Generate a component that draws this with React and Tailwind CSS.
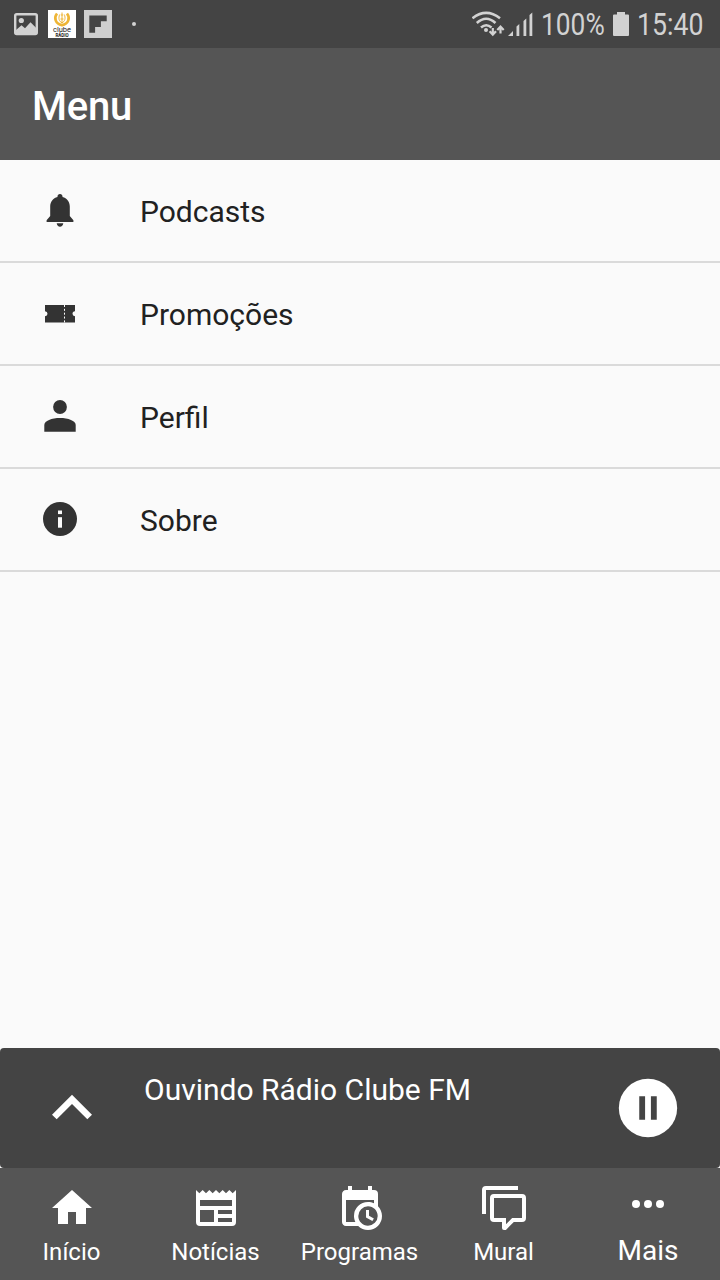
import { useState } from "react";

// =============================
// ICONS
// =============================

function NavIcon({ path }) {
  return (
    <svg className="size-12" viewBox="0 0 24 24" fill="currentColor">
      <path d={path} />
    </svg>
  );
}

const homePath = "M10,20V14H14V20H19V12H22L12,3L2,12H5V20H10Z";
const newsPath =
  "M20,11H4V8H20M20,15H13V13H20M20,19H13V17H20M11,19H4V13H11M20.33,4.67L18.67,3L17,4.67L15.33,3L13.67,4.67L12,3L10.33,4.67L8.67,3L7,4.67L5.33,3L3.67,4.67L2,3V19A2,2 0 0,0 4,21H20A2,2 0 0,0 22,19V3L20.33,4.67Z";
const calendarPath =
  "M15,13H16.5V15.82L18.94,17.23L18.19,18.53L15,16.69V13M19,8H5V19H9.67C9.24,18.09 9,17.07 9,16A7,7 0 0,1 16,9C17.07,9 18.09,9.24 19,9.67V8M5,21C3.89,21 3,20.1 3,19V5C3,3.89 3.89,3 5,3H6V1H8V3H16V1H18V3H19A2,2 0 0,1 21,5V11.1C22.24,12.36 23,14.09 23,16A7,7 0 0,1 16,23C14.09,23 12.36,22.24 11.1,21H5M16,11.15A4.85,4.85 0 0,0 11.15,16C11.15,18.68 13.32,20.85 16,20.85A4.85,4.85 0 0,0 20.85,16C20.85,13.32 18.68,11.15 16,11.15Z";
const commentsPath =
  "M12,23A1,1 0 0,1 11,22V19H7A2,2 0 0,1 5,17V7A2,2 0 0,1 7,5H21A2,2 0 0,1 23,7V17A2,2 0 0,1 21,19H16.9L13.2,22.71C13,22.89 12.76,23 12.5,23H12M13,17V20.08L16.08,17H21V7H7V17H13M3,15H1V3A2,2 0 0,1 3,1H19V3H3V15Z";

function BellIcon() {
  return (
    <svg className="size-10" viewBox="0 0 40 40" fill="currentColor">
      <path d="M20 3c-1.500 0-2.500 1-2.500 2.300v.8C13 7.200 10.200 11 10.200 15.500V25L6.600 29.300V31h26.800v-1.700L29.800 25v-9.500c0-4.500-2.800-8.300-7.300-9.400v-.8C22.500 4 21.500 3 20 3z" />
      <path d="M16.700 32.300h6.600c-.3 2.100-1.600 3.400-3.300 3.400s-3-1.300-3.300-3.400z" />
    </svg>
  );
}

function TicketIcon() {
  return (
    <svg className="size-10" viewBox="0 0 40 40" fill="currentColor">
      <path d="M5 11h30v6.200a2.500 2.500 0 0 0 0 5v6.200H5v-6.200a2.500 2.500 0 0 0 0-5z" />
      <path d="M24.500 11v17.400" stroke="#fafafa" strokeWidth="1" strokeDasharray="2 1.850" />
    </svg>
  );
}

function PersonIcon() {
  return (
    <svg className="size-10" viewBox="0 0 40 40" fill="currentColor">
      <circle cx="20" cy="10" r="6.900" />
      <path d="M4.300 34.700V28c0-4.300 7.500-7 15.700-7s15.700 2.700 15.700 7v6.700z" />
    </svg>
  );
}

function InfoIcon() {
  return (
    <svg className="size-10" viewBox="0 0 40 40">
      <circle cx="20" cy="19" r="17" fill="currentColor" />
      <rect x="18" y="10.500" width="4" height="3.600" fill="#fafafa" />
      <rect x="18" y="17.200" width="4" height="10.500" fill="#fafafa" />
    </svg>
  );
}

function DotsIcon() {
  return (
    <svg className="size-12" viewBox="0 0 48 48" fill="currentColor">
      <circle cx="12" cy="24" r="4" />
      <circle cx="24" cy="24" r="4" />
      <circle cx="36" cy="24" r="4" />
    </svg>
  );
}

// =============================
// STATUS BAR
// =============================

function StatusBar() {
  return (
    <div className="flex h-12 items-center justify-between bg-[#444444] text-[#d2d2d2]">
      <div className="flex items-center pl-3.5">
        <svg className="h-7 w-6" viewBox="0 0 24 28">
          <rect x="1.200" y="4.200" width="21.600" height="19.800" rx="1.500" fill="none" stroke="currentColor" strokeWidth="2.400" />
          <circle cx="7.300" cy="10.500" r="2.600" fill="currentColor" />
          <path d="M3 21l4.500-5.300 3.300 3 5.700-6L21 18v3z" fill="#444444" />
          <path d="M2 20l5.500-4.800 3.500 3 5.500-6 5.500 5.500v6.300H2z" fill="currentColor" />
        </svg>

        {/* radio logo */}
        <div className="relative ml-2.5 flex size-7 flex-col items-center justify-end overflow-hidden bg-white font-['Roboto'] text-[#222222]">
          <svg className="absolute inset-0 size-7" viewBox="0 0 28 28" fill="none" stroke="#eeb536">
            <path d="M9 3.500C5.500 8 7.500 14 14 15.300C20.500 14 22.500 8 19 3.500" strokeWidth="2.600" />
            <path d="M11.700 4.500c-1.500 3.500-.7 7 2.300 8.300c3-1.300 3.800-4.800 2.300-8.300" strokeWidth="1" />
            <path d="M14 2.500v11M12.800 5h2.400M12.500 9h3" strokeWidth="1" />
          </svg>
          <div className="text-[7.500px] leading-[7px]">clube</div>
          <div className="text-[4.500px] font-bold leading-[5px]">RÁDIO</div>
        </div>

        <svg className="ml-2 size-7" viewBox="0 0 28 28">
          <path d="M0 0h28v28H0z" fill="#cfcfcf" />
          <path d="M5.300 5.500h17.400v5.800h-5.800v5.800h-5.800v5.600H5.300z" fill="#444444" />
        </svg>
        <div className="ml-5 size-1 rounded-full bg-current" />
      </div>

      <div className="flex items-center pr-4 text-[31px] leading-12">
        <svg className="h-12 w-16" viewBox="0 0 64 48" fill="none" stroke="currentColor" strokeWidth="2.600">
          <path d="M0.500 18.300Q14.200 7.500 28 18.300" />
          <path d="M4.800 23Q14.200 14.500 23.500 23" />
          <path d="M9 27.500Q14.200 23 19.500 27.500" />
          <circle cx="14" cy="30" r="2" fill="currentColor" stroke="none" />
          <path d="M20.800 28v7M17.600 31.300l3.200 3.300 3.200-3.300M28.500 33.500v-7M25.300 30l3.200-3.300 3.200 3.300" strokeWidth="2.200" />
          <path d="M36 36h5v-5zM44.500 36h2.800V24L44.500 26.500zM51.500 36h2.800V18.500L51.500 21zM57.500 36h2.800V12.500L57.500 15z" fill="currentColor" stroke="none" />
        </svg>
        <div className="ml-[5px] w-[65px] pt-0.5">
          <div className="w-max origin-left scale-x-[0.85]">100%</div>
        </div>
        <svg className="ml-[7px] h-6 w-4" viewBox="0 0 16 24" fill="currentColor">
          <path d="M4 0h8v2.500h3a1 1 0 0 1 1 1V23a1 1 0 0 1-1 1H1a1 1 0 0 1-1-1V3.500a1 1 0 0 1 1-1h3z" />
        </svg>
        <div className="ml-2 w-[67px] pt-0.5">
          <div className="w-max origin-left scale-x-[0.86]">15:40</div>
        </div>
      </div>
    </div>
  );
}

// =============================
// PAGE
// =============================

const items = [
  { label: "Podcasts", icon: <BellIcon /> },
  { label: "Promoções", icon: <TicketIcon /> },
  { label: "Perfil", icon: <PersonIcon /> },
  { label: "Sobre", icon: <InfoIcon /> },
];

const tabs = [
  { label: "Início", icon: <NavIcon path={homePath} /> },
  { label: "Notícias", icon: <NavIcon path={newsPath} /> },
  { label: "Programas", icon: <NavIcon path={calendarPath} /> },
  { label: "Mural", icon: <NavIcon path={commentsPath} /> },
  { label: "Mais", icon: <DotsIcon /> },
];

export default function App() {
  const [active, setActive] = useState("Mais");
  const [playing, setPlaying] = useState(true);

  return (
    <div className="flex h-[1280px] w-[720px] flex-col overflow-hidden bg-[#fafafa] font-['Roboto',sans-serif]">
      <StatusBar />

      {/* HEADER */}
      <header className="flex h-28 items-center bg-[#555555] px-8 text-white">
        <h1 className="pt-1.5 text-[40px] font-medium leading-12 tracking-[-0.2px]">Menu</h1>
      </header>

      {/* LIST */}
      <main className="flex-1">
        {items.map((item) => (
          <button
            key={item.label}
            className="flex h-[103px] w-full items-center gap-[60px] border-b-2 border-[#dadada] pl-10 text-left text-[30px] text-[#212121]"
          >
            <span className="text-[#333333]">{item.icon}</span>
            <span className="pt-0.5">{item.label}</span>
          </button>
        ))}
      </main>

      {/* PLAYER */}
      <div className="h-30 bg-[#fafafa]">
        <div className="flex h-full items-center rounded bg-[#444444] text-white">
          <div className="flex w-36 justify-center">
            <svg className="size-20" viewBox="0 0 24 24" fill="currentColor">
              <path d="M7.410,15.410L12,10.830L16.590,15.410L18,14L12,8L6,14L7.410,15.410Z" />
            </svg>
          </div>
          <div className="flex-1 self-start pt-5 text-[30px] leading-11">Ouvindo Rádio Clube FM</div>
          <button className="flex w-36 justify-center" onClick={() => setPlaying(!playing)}>
            <svg className="size-[70px]" viewBox="0 0 24 24">
              <circle cx="12" cy="12" r="10" fill="currentColor" />
              {playing ? (
                <path d="M9 8h2v8H9zM13 8h2v8h-2z" fill="#444444" />
              ) : (
                <path d="M10 8v8l6-4z" fill="#444444" />
              )}
            </svg>
          </button>
        </div>
      </div>

      {/* BOTTOM TABS */}
      <nav className="grid h-28 grid-cols-5 bg-[#555555] text-white">
        {tabs.map((tab) => (
          <button
            key={tab.label}
            onClick={() => setActive(tab.label)}
            className={
              active === tab.label
                ? "flex flex-col items-center pt-3 text-[28px] leading-[46px]"
                : "flex flex-col items-center pt-4 text-[24px] leading-10"
            }
          >
            {tab.icon}
            <span className={active === tab.label ? "" : "pr-px"}>{tab.label}</span>
          </button>
        ))}
      </nav>
    </div>
  );
}
